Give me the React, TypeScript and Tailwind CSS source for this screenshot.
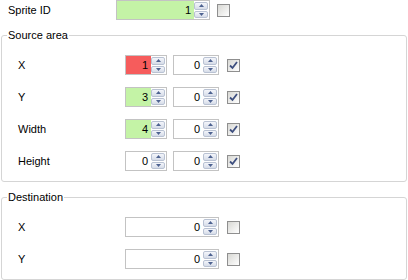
import React from "react";

type Tint = "green" | "red" | "none";

function SpinBox({ value, width, tint = "none" }: { value: string; width: string; tint?: Tint }) {
  const bg = tint === "green" ? "bg-[#c4f3a6]" : tint === "red" ? "bg-[#f65c5c]" : "bg-white";
  return (
    <div className={`${width} h-[20px] flex border border-[#c3c3c3] bg-white`}>
      <div className={`flex-1 ${bg} flex items-center justify-end pr-[3px] leading-none`}>{value}</div>
      <div className="w-[15px] flex flex-col gap-[1px] p-[1px] pl-0">
        <SpinButton up />
        <SpinButton />
      </div>
    </div>
  );
}

function SpinButton({ up }: { up?: boolean }) {
  return (
    <div className="flex-1 flex items-center justify-center rounded-[2px] border border-[#b9c2d3] bg-gradient-to-b from-[#f4f6fb] to-[#d6dce8]">
      <svg width="5" height="3" viewBox="0 0 5 3">
        {up ? <path d="M0 3 L2.5 0 L5 3 Z" fill="#4d6290" /> : <path d="M0 0 L2.5 3 L5 0 Z" fill="#4d6290" />}
      </svg>
    </div>
  );
}

function CheckBox({ checked }: { checked?: boolean }) {
  return (
    <div className="w-[13px] h-[13px] border border-[#8f8f8f] bg-gradient-to-br from-[#d8d8d4] to-white flex items-center justify-center">
      {checked && (
        <svg width="9" height="9" viewBox="0 0 9 9">
          <path d="M1 4.5 L3.5 7 L8 1" fill="none" stroke="#3e4f7f" strokeWidth="1.8" />
        </svg>
      )}
    </div>
  );
}

function Row({ label, children }: { label: string; children: React.ReactNode }) {
  return (
    <div className="flex items-center h-[20px]">
      <div className="w-[107px]">{label}</div>
      {children}
    </div>
  );
}

function Group({ title, children }: { title: string; children: React.ReactNode }) {
  return (
    <fieldset className="ml-[1px] w-[406px] border border-[#d5d5d5] rounded-[3px] p-0">
      <legend className="ml-[5px] px-[1px] leading-[12px]">{title}</legend>
      <div className="flex flex-col gap-[12px] pt-[14px] pb-[10px] pl-[16px]">{children}</div>
    </fieldset>
  );
}

export default function App() {
  return (
    <div className="w-[408px] h-[280px] bg-white text-black text-[11px] font-['Liberation_Sans',Arial,sans-serif] overflow-hidden">
      <div className="flex items-center h-[20px] pl-[8px]">
        <div className="w-[108px]">Sprite ID</div>
        <SpinBox value="1" width="w-[94px]" tint="green" />
        <div className="ml-[7px]">
          <CheckBox />
        </div>
      </div>

      <div className="mt-[9px]">
        <Group title="Source area">
          {[
            ["X", "1", "red"],
            ["Y", "3", "green"],
            ["Width", "4", "green"],
            ["Height", "0", "none"],
          ].map(([label, v, tint]) => (
            <Row key={label} label={label}>
              <SpinBox value={v} width="w-[42px]" tint={tint as Tint} />
              <div className="ml-[6px]">
                <SpinBox value="0" width="w-[46px]" />
              </div>
              <div className="ml-[8px]">
                <CheckBox checked />
              </div>
            </Row>
          ))}
        </Group>
      </div>

      <div className="mt-[9px]">
        <Group title="Destination">
          {["X", "Y"].map((label) => (
            <Row key={label} label={label}>
              <SpinBox value="0" width="w-[94px]" />
              <div className="ml-[8px]">
                <CheckBox />
              </div>
            </Row>
          ))}
        </Group>
      </div>
    </div>
  );
}
